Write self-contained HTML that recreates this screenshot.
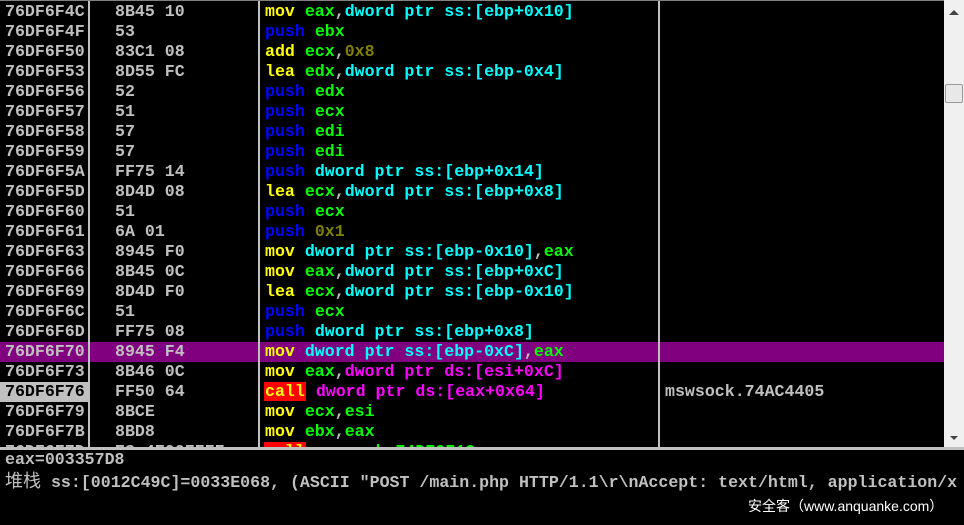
<html><head><style>
body{margin:0;width:964px;height:525px;background:#000;overflow:hidden;position:relative;font-family:"Liberation Mono",monospace;font-weight:bold;font-size:16.6px;}
#p{position:absolute;left:0;top:0;width:944px;height:447px;overflow:hidden;}
.r{position:absolute;left:0;height:20px;line-height:20px;width:944px;white-space:pre;color:#c0c0c0}
.a{position:absolute;left:5px}.h{position:absolute;left:115px}.d{position:absolute;left:265px}.c{position:absolute;left:665px}
.v{position:absolute;top:0;height:447px;width:2px;background:#c0c0c0}
.y{color:#ff0}.g{color:#0f0}.b{color:#00f}.cy{color:#0ff}.m{color:#f0f}.o{color:#808000}
.call{background:#f00;color:#ff0;padding:0 1px;margin-left:-1px}
.sel{background:#800080}
.cur .a{background:#c0c0c0;color:#000;left:0;padding-left:5px;width:84px}
#sb{position:absolute;left:944px;top:0;width:20px;height:447px;background:#f0f0f0}
#bot{position:absolute;left:0;top:449px;width:964px;height:76px;white-space:pre;color:#c0c0c0}
</style></head><body>
<div id="p">
<div class="r" style="top:2px"><span class="a">76DF6F4C</span><span class="h">8B45 10</span><span class="d"><span class="y">mov</span> <span class="g">eax</span>,<span class="cy">dword ptr ss:[ebp+0x10]</span></span></div>
<div class="r" style="top:22px"><span class="a">76DF6F4F</span><span class="h">53</span><span class="d"><span class="b">push</span> <span class="g">ebx</span></span></div>
<div class="r" style="top:42px"><span class="a">76DF6F50</span><span class="h">83C1 08</span><span class="d"><span class="y">add</span> <span class="g">ecx</span>,<span class="o">0x8</span></span></div>
<div class="r" style="top:62px"><span class="a">76DF6F53</span><span class="h">8D55 FC</span><span class="d"><span class="y">lea</span> <span class="g">edx</span>,<span class="cy">dword ptr ss:[ebp-0x4]</span></span></div>
<div class="r" style="top:82px"><span class="a">76DF6F56</span><span class="h">52</span><span class="d"><span class="b">push</span> <span class="g">edx</span></span></div>
<div class="r" style="top:102px"><span class="a">76DF6F57</span><span class="h">51</span><span class="d"><span class="b">push</span> <span class="g">ecx</span></span></div>
<div class="r" style="top:122px"><span class="a">76DF6F58</span><span class="h">57</span><span class="d"><span class="b">push</span> <span class="g">edi</span></span></div>
<div class="r" style="top:142px"><span class="a">76DF6F59</span><span class="h">57</span><span class="d"><span class="b">push</span> <span class="g">edi</span></span></div>
<div class="r" style="top:162px"><span class="a">76DF6F5A</span><span class="h">FF75 14</span><span class="d"><span class="b">push</span> <span class="cy">dword ptr ss:[ebp+0x14]</span></span></div>
<div class="r" style="top:182px"><span class="a">76DF6F5D</span><span class="h">8D4D 08</span><span class="d"><span class="y">lea</span> <span class="g">ecx</span>,<span class="cy">dword ptr ss:[ebp+0x8]</span></span></div>
<div class="r" style="top:202px"><span class="a">76DF6F60</span><span class="h">51</span><span class="d"><span class="b">push</span> <span class="g">ecx</span></span></div>
<div class="r" style="top:222px"><span class="a">76DF6F61</span><span class="h">6A 01</span><span class="d"><span class="b">push</span> <span class="o">0x1</span></span></div>
<div class="r" style="top:242px"><span class="a">76DF6F63</span><span class="h">8945 F0</span><span class="d"><span class="y">mov</span> <span class="cy">dword ptr ss:[ebp-0x10]</span>,<span class="g">eax</span></span></div>
<div class="r" style="top:262px"><span class="a">76DF6F66</span><span class="h">8B45 0C</span><span class="d"><span class="y">mov</span> <span class="g">eax</span>,<span class="cy">dword ptr ss:[ebp+0xC]</span></span></div>
<div class="r" style="top:282px"><span class="a">76DF6F69</span><span class="h">8D4D F0</span><span class="d"><span class="y">lea</span> <span class="g">ecx</span>,<span class="cy">dword ptr ss:[ebp-0x10]</span></span></div>
<div class="r" style="top:302px"><span class="a">76DF6F6C</span><span class="h">51</span><span class="d"><span class="b">push</span> <span class="g">ecx</span></span></div>
<div class="r" style="top:322px"><span class="a">76DF6F6D</span><span class="h">FF75 08</span><span class="d"><span class="b">push</span> <span class="cy">dword ptr ss:[ebp+0x8]</span></span></div>
<div class="r sel" style="top:342px"><span class="a">76DF6F70</span><span class="h">8945 F4</span><span class="d"><span class="y">mov</span> <span class="cy">dword ptr ss:[ebp-0xC]</span>,<span class="g">eax</span></span></div>
<div class="r" style="top:362px"><span class="a">76DF6F73</span><span class="h">8B46 0C</span><span class="d"><span class="y">mov</span> <span class="g">eax</span>,<span class="m">dword ptr ds:[esi+0xC]</span></span></div>
<div class="r cur" style="top:382px"><span class="a">76DF6F76</span><span class="h">FF50 64</span><span class="d"><span class="call">call</span> <span class="m">dword ptr ds:[eax+0x64]</span></span><span class="c">mswsock.74AC4405</span></div>
<div class="r" style="top:402px"><span class="a">76DF6F79</span><span class="h">8BCE</span><span class="d"><span class="y">mov</span> <span class="g">ecx</span>,<span class="g">esi</span></span></div>
<div class="r" style="top:422px"><span class="a">76DF6F7B</span><span class="h">8BD8</span><span class="d"><span class="y">mov</span> <span class="g">ebx</span>,<span class="g">eax</span></span></div>
<div class="r" style="top:442px"><span class="a">76DF6F7D</span><span class="h">E8 4E00FFFF</span><span class="d"><span class="call">call</span> <span class="g">mswsock.74DE0F1C</span></span></div>
<div class="v" style="left:88px"></div><div class="v" style="left:258px"></div><div class="v" style="left:658px"></div>
</div>
<div style="position:absolute;left:0;top:0;width:944px;height:1px;background:#808080"></div>
<div id="sb"><div style="position:absolute;left:5px;top:10px;width:0;height:0;border-left:5px solid transparent;border-right:5px solid transparent;border-bottom:5px solid #444"></div>
<div style="position:absolute;left:1px;top:84px;width:16px;height:17px;background:#e8e8e8;border:1px solid #999;border-radius:2px"></div>
<div style="position:absolute;left:6px;top:436px;width:0;height:0;border-left:4px solid transparent;border-right:4px solid transparent;border-top:4px solid #444"></div></div>
<div style="position:absolute;left:0;top:447px;width:964px;height:3px;background:#c0c0c0"></div>
<div id="bot"><div style="position:absolute;left:5px;top:1px;line-height:20px">eax=003357D8</div><div style="position:absolute;left:5px;top:21px;line-height:20px"><span style="font-family:'Noto Sans CJK SC',sans-serif;font-weight:normal;font-size:18px">堆栈</span> ss:[0012C49C]=0033E068, (ASCII "POST /main.php HTTP/1.1\r\nAccept: text/html, application/x</div>
<div style="position:absolute;left:748px;top:47px;font-family:'Liberation Sans','Noto Sans CJK SC',sans-serif;font-weight:normal;font-size:14px;color:#fff">安全客（www.anquanke.com）</div></div>
</body></html>
